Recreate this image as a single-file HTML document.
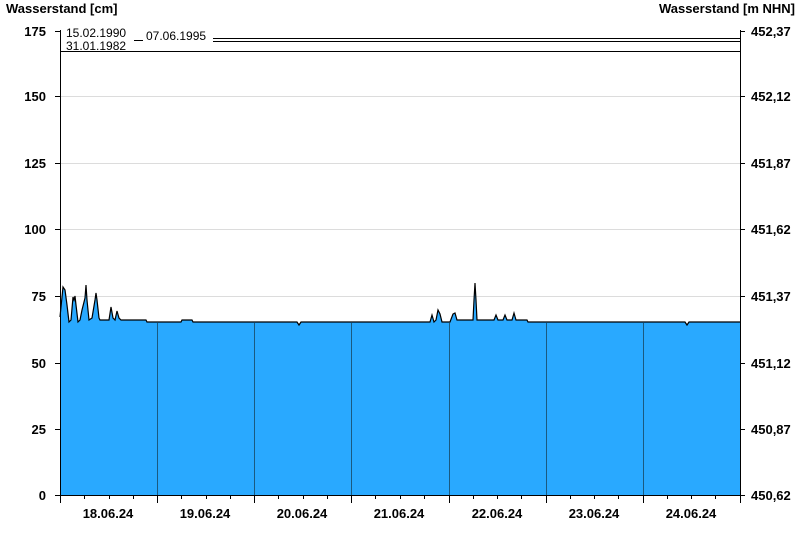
<!DOCTYPE html>
<html><head><meta charset="utf-8"><style>body{margin:0;background:#fff}svg{display:block;font-family:"Liberation Sans",Arial,sans-serif}</style></head><body>
<svg width="800" height="550" viewBox="0 0 800 550">
<rect width="800" height="550" fill="#fff"/>
<text x="6" y="13" font-size="13" font-weight="bold">Wasserstand [cm]</text>
<text x="795" y="13" font-size="13" font-weight="bold" text-anchor="end">Wasserstand [m NHN]</text>
<g stroke="#dcdcdc" stroke-width="1">
<line x1="60" x2="740" y1="96.5" y2="96.5"/><line x1="60" x2="740" y1="163.5" y2="163.5"/><line x1="60" x2="740" y1="229.5" y2="229.5"/><line x1="60" x2="740" y1="296.5" y2="296.5"/><line x1="60" x2="740" y1="363.5" y2="363.5"/><line x1="60" x2="740" y1="429.5" y2="429.5"/>
</g>
<polygon fill="#29a9ff" points="60,495 60,317 63,287 65,290 67,305 69,322 71,320 73,297 74,300 75,296 76,305 78,322 80,320 82,310 85,298 86,285 87,300 89,320 92,318 95,300 96,293 97,300 99,318 100,320 109,320 111,307 113,318 115,320 117,311 119,318 121,320 146,320 147,322 181,322 182,320 192,320 193,322 297,322 299,325 301,322 430,322 432,315 434,322 436,320 438,310 440,314 442,322 450,322 453,314 455,313 457,320 473,320 474,300 475,283 476,300 477,320 494,320 496,315 498,320 503,320 505,315 507,320 512,320 514,313 516,320 527,320 528,322 685,322 687,325 689,322 740,322 740,495"/>
<polyline fill="none" stroke="#000" stroke-width="1.2" points="60,317 63,287 65,290 67,305 69,322 71,320 73,297 74,300 75,296 76,305 78,322 80,320 82,310 85,298 86,285 87,300 89,320 92,318 95,300 96,293 97,300 99,318 100,320 109,320 111,307 113,318 115,320 117,311 119,318 121,320 146,320 147,322 181,322 182,320 192,320 193,322 297,322 299,325 301,322 430,322 432,315 434,322 436,320 438,310 440,314 442,322 450,322 453,314 455,313 457,320 473,320 474,300 475,283 476,300 477,320 494,320 496,315 498,320 503,320 505,315 507,320 512,320 514,313 516,320 527,320 528,322 685,322 687,325 689,322 740,322"/>
<g stroke="#1a5a80" stroke-width="1">
<line x1="157.5" x2="157.5" y1="323" y2="495"/><line x1="254.5" x2="254.5" y1="323" y2="495"/><line x1="351.5" x2="351.5" y1="323" y2="495"/><line x1="449.5" x2="449.5" y1="323" y2="495"/><line x1="546.5" x2="546.5" y1="323" y2="495"/><line x1="643.5" x2="643.5" y1="323" y2="495"/>
</g>
<g stroke="#000" stroke-width="1">
<line x1="60.5" x2="60.5" y1="30" y2="495"/><line x1="740.5" x2="740.5" y1="30" y2="495"/>
<line x1="55" x2="745" y1="495.5" y2="495.5"/>
<line x1="213" x2="740" y1="38.5" y2="38.5"/><line x1="213" x2="740" y1="41.5" y2="41.5"/><line x1="134" x2="143" y1="40.5" y2="40.5"/>
<line x1="60" x2="740" y1="51.5" y2="51.5"/>
<line x1="55" x2="60" y1="31.5" y2="31.5"/><line x1="55" x2="60" y1="96.5" y2="96.5"/><line x1="55" x2="60" y1="163.5" y2="163.5"/><line x1="55" x2="60" y1="229.5" y2="229.5"/><line x1="55" x2="60" y1="296.5" y2="296.5"/><line x1="55" x2="60" y1="363.5" y2="363.5"/><line x1="55" x2="60" y1="429.5" y2="429.5"/>
<line x1="740" x2="745" y1="31.5" y2="31.5"/><line x1="740" x2="745" y1="96.5" y2="96.5"/><line x1="740" x2="745" y1="163.5" y2="163.5"/><line x1="740" x2="745" y1="229.5" y2="229.5"/><line x1="740" x2="745" y1="296.5" y2="296.5"/><line x1="740" x2="745" y1="363.5" y2="363.5"/><line x1="740" x2="745" y1="429.5" y2="429.5"/>
<line x1="60.5" x2="60.5" y1="495" y2="503"/><line x1="157.5" x2="157.5" y1="495" y2="503"/><line x1="254.5" x2="254.5" y1="495" y2="503"/><line x1="351.5" x2="351.5" y1="495" y2="503"/><line x1="449.5" x2="449.5" y1="495" y2="503"/><line x1="546.5" x2="546.5" y1="495" y2="503"/><line x1="643.5" x2="643.5" y1="495" y2="503"/><line x1="740.5" x2="740.5" y1="495" y2="503"/>
<path d="M84.5 495v4M109.5 495v4M133.5 495v4M181.5 495v4M206.5 495v4M230.5 495v4M278.5 495v4M303.5 495v4M327.5 495v4M375.5 495v4M400.5 495v4M424.5 495v4M473.5 495v4M497.5 495v4M521.5 495v4M570.5 495v4M594.5 495v4M618.5 495v4M667.5 495v4M691.5 495v4M715.5 495v4"/>
</g>
<g font-size="12" fill="#000"><text x="66" y="37">15.02.1990</text><text x="146" y="40">07.06.1995</text><text x="66" y="50">31.01.1982</text></g>
<g font-size="13" font-weight="bold" text-anchor="end"><text x="46" y="36">175</text><text x="46" y="101">150</text><text x="46" y="168">125</text><text x="46" y="234">100</text><text x="46" y="301">75</text><text x="46" y="368">50</text><text x="46" y="434">25</text><text x="46" y="500">0</text></g>
<g font-size="13" font-weight="bold"><text x="751" y="36">452,37</text><text x="751" y="101">452,12</text><text x="751" y="168">451,87</text><text x="751" y="234">451,62</text><text x="751" y="301">451,37</text><text x="751" y="368">451,12</text><text x="751" y="434">450,87</text><text x="751" y="500">450,62</text></g>
<g font-size="13" font-weight="bold" text-anchor="middle"><text x="108" y="518">18.06.24</text><text x="205" y="518">19.06.24</text><text x="302" y="518">20.06.24</text><text x="399" y="518">21.06.24</text><text x="497" y="518">22.06.24</text><text x="594" y="518">23.06.24</text><text x="691" y="518">24.06.24</text></g>
</svg>
</body></html>
